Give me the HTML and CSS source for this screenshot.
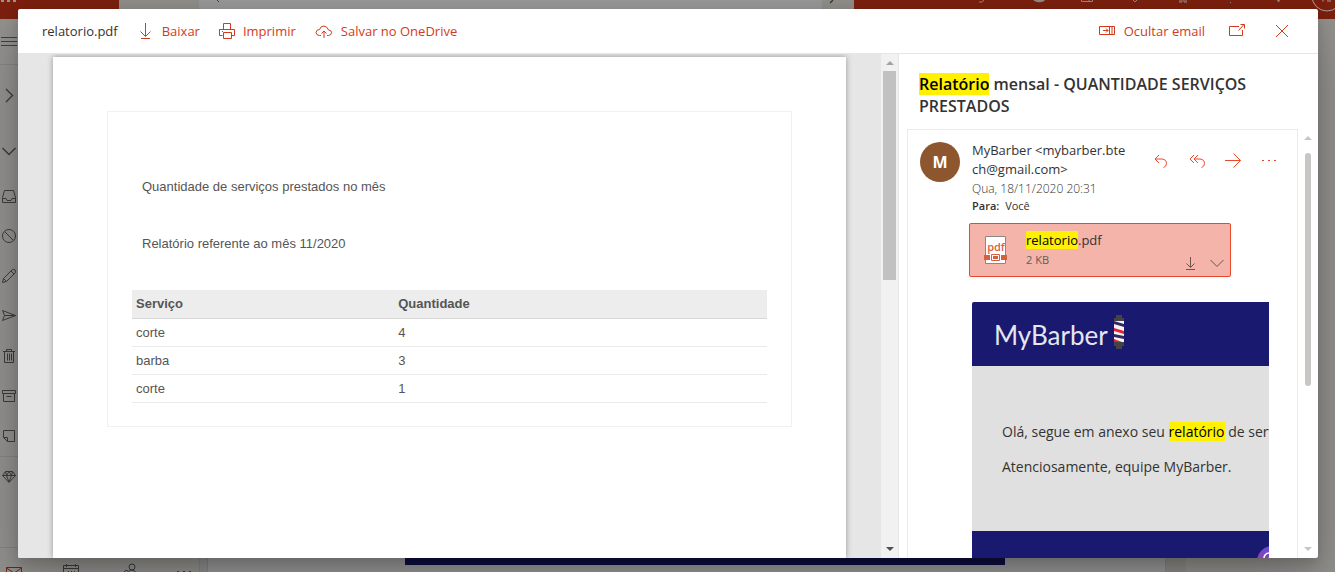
FILE: index.html
```html
<!DOCTYPE html>
<html lang="pt-BR">
<head>
<meta charset="utf-8">
<title>relatorio.pdf</title>
<link rel="stylesheet" href="styles.css">
</head>
<body>
<div class="app" aria-hidden="true">
  <div class="topbar">
    <div class="brand"><svg width="18" height="4" viewBox="0 0 18 4"><path fill="#9a9390" d="M1 0h3v2H1zM7 0h3v2H7zM13 0h3v2h-3z"/></svg></div>
    <div class="search-side search-start"></div>
    <div class="search-field"><svg width="12" height="4" viewBox="0 0 12 4"><path stroke="#444" fill="none" d="M2 0l2 2"/></svg></div>
    <div class="search-side search-end"><svg width="12" height="4" viewBox="0 0 12 4"><path stroke="#333" stroke-width="1.2" fill="none" d="M7 0L4 3"/></svg></div>
    <div class="tools">
      <span class="tool first"><svg width="16" height="5" viewBox="0 0 16 5"><path stroke="#958a86" fill="none" d="M5 2q4 1 5-2"/></svg></span>
      <span class="tool"><svg width="16" height="5" viewBox="0 0 16 5"><path fill="#958a86" d="M2 0h12q-1 2-4 2-4 1-8-2z"/></svg></span>
      <span class="tool"><svg width="16" height="5" viewBox="0 0 16 5"><path stroke="#958a86" fill="none" d="M2.500 0v1.500h11V0M10 0v1.500"/></svg></span>
      <span class="tool"><svg width="16" height="5" viewBox="0 0 16 5"><path stroke="#958a86" fill="none" d="M6 0l2 2 2-2"/></svg></span>
      <span class="tool"><svg width="16" height="5" viewBox="0 0 16 5"><path stroke="#958a86" fill="none" d="M4 2h3V0M12 2H9V0M5 0v2M11 0v2"/></svg></span>
      <span class="tool"><svg width="16" height="5" viewBox="0 0 16 5"><path fill="#958a86" d="M7 2h1v1H7z"/></svg></span>
      <span class="tool"><svg width="16" height="5" viewBox="0 0 16 5"><path fill="#958a86" d="M6 0h3l-1 2H7z"/></svg></span>
      <span class="tool"><svg width="34" height="12" viewBox="0 0 34 12"><circle cx="17" cy="-4" r="15" fill="none" stroke="#aaa19e"/><path stroke="#aaa19e" fill="none" d="M13 0v1.500M17 1h4"/></svg></span>
    </div>
  </div>
  <div class="workspace">
    <div class="rail">
      <div class="rail-menu"><svg width="18" height="10" viewBox="0 0 18 10"><path stroke="#80271a" d="M1 .5h16M1 4.500h16M1 8.500h16"/></svg></div>
      <div class="rail-row tall"><svg width="18" height="18" viewBox="0 0 18 18"><path class="ln thick" d="M6 3l6.500 6.500L6 16"/></svg></div>
      <div class="rail-row mid"><svg width="18" height="18" viewBox="0 0 18 18"><path class="ln thick" d="M2.500 6L9 12.500 15.500 6"/></svg></div>
      <div class="rail-row"><svg width="18" height="18" viewBox="0 0 18 18"><path class="ln" d="M4.500 3.500h9l2 7v5h-13v-5zM2.500 11.500H6l1 2h4l1-2h3.500"/></svg></div>
      <div class="rail-row"><svg width="18" height="18" viewBox="0 0 18 18"><circle class="ln" cx="9" cy="9" r="6.500"/><path class="ln" d="M4.500 4.500l9 9"/></svg></div>
      <div class="rail-row"><svg width="18" height="18" viewBox="0 0 18 18"><path class="ln" d="M2.500 15.500l1-4 9-9q1.500-.5 2.500.5t.5 2.500l-9 9zM3.500 11.500l3 3M11 4l3 3"/></svg></div>
      <div class="rail-row"><svg width="18" height="18" viewBox="0 0 18 18"><path class="ln" d="M2.500 3.500l13 5-13 5 2-5zM4.500 8.500h11"/></svg></div>
      <div class="rail-row"><svg width="18" height="18" viewBox="0 0 18 18"><path class="ln" d="M3 4.500h12M6.500 4V2.500h5V4M4.500 4.500v11h9v-11M7.500 6.500v7M9.500 6.500v7M11.500 6.500v7"/></svg></div>
      <div class="rail-row"><svg width="18" height="18" viewBox="0 0 18 18"><path class="ln" d="M2.500 3.500h13v3h-13zM3.500 6.500v8h11v-8M6.500 9.500h5"/></svg></div>
      <div class="rail-row"><svg width="18" height="18" viewBox="0 0 18 18"><path class="ln" d="M3.500 3.500h11v11h-7l-4-4zM3.500 10.500h4v4"/></svg></div>
      <div class="rail-row ruled"><svg width="18" height="18" viewBox="0 0 18 18"><path class="ln" d="M5.500 3.500h7l3 4-6.500 7-6.500-7zM2.500 7.500h13M5.500 3.500l1 4L9 14l2.500-6.500 1-4M6.500 7.500L9 3.500l2.500 4"/></svg></div>
      <div class="rail-nav">
        <svg width="16" height="16" viewBox="0 0 16 16"><path fill="none" stroke="#7a241a" d="M.5 4.500h15v10H.5zM.5 5L8 10l7.500-5"/></svg>
        <svg width="16" height="16" viewBox="0 0 16 16"><path class="ln" d="M.5 2.500h15v13H.5zM.5 5.500h15M3.500 1v3M12.500 1v3M5 8.500h1M8 8.500h1M11 8.500h1"/></svg>
        <svg width="16" height="16" viewBox="0 0 16 16"><circle class="ln" cx="12" cy="4" r="3"/><path class="ln" d="M7 13q0-6 5-6 3 0 4 3M4 9q2-3 4-1"/></svg>
        <svg width="16" height="16" viewBox="0 0 16 16"><path fill="#3c3c3c" d="M0 8h2v1H0zM6 8h2v1H6zM12 8h2v1h-2z"/></svg>
      </div>
    </div>
    <div class="reading"><div class="mail-strip"></div></div>
    <div class="ad"></div>
  </div>
</div>

<main class="dialog" role="dialog" aria-label="relatorio.pdf">
  <header class="bar">
    <span class="file">relatorio.pdf</span>
    <button class="cmd" type="button"><svg width="16" height="18" viewBox="0 0 16 18"><path d="M7.500 1v13M2.500 9.500l5 5 5-5M3 16.500h9"/></svg>Baixar</button>
    <button class="cmd print" type="button"><svg width="16" height="18" viewBox="0 0 16 18"><path d="M4.500 7.500v-6h7v6M3.500 13.500h-3v-6h15v6h-3M4.500 10.500h8v6h-8zM3 9.500h1"/></svg>Imprimir</button>
    <button class="cmd" type="button"><svg width="18" height="18" viewBox="0 0 18 18"><path d="M6 13.500H4.500q-3 0-3.500-3 .5-3 3.500-3 1-3.500 4.500-3.500 3.500.5 4.500 4 3 0 3 2.500t-3 3H12M9 16V9M6.500 11.500L9 9l2.500 2.500"/></svg>Salvar no OneDrive</button>
    <div class="bar-end">
      <button class="cmd" type="button"><svg width="18" height="18" viewBox="0 0 18 18"><path d="M1.500 4.500h15v8h-15zM11.500 4.500v8M14 4.500v8M5 8.500h5M8 6.500l2 2-2 2"/></svg>Ocultar email</button>
      <button class="cmd icon" type="button" aria-label="Abrir em nova janela"><svg width="16" height="18" viewBox="0 0 16 18"><path d="M10 4.500H.5v9h13V8M9.500 8.500l5.500-6M11.500 2.500h4v4"/></svg></button>
      <button class="cmd icon close" type="button" aria-label="Fechar"><svg width="14" height="18" viewBox="0 0 14 18"><path d="M1 3l12 12M13 3L1 15"/></svg></button>
    </div>
  </header>
  <div class="content">
    <section class="viewer">
      <article class="sheet">
        <div class="frame">
          <p>Quantidade de serviços prestados no mês</p>
          <p>Relatório referente ao mês 11/2020</p>
          <table>
            <thead><tr><th>Serviço</th><th>Quantidade</th></tr></thead>
            <tbody>
              <tr><td>corte</td><td>4</td></tr>
              <tr><td>barba</td><td>3</td></tr>
              <tr><td>corte</td><td>1</td></tr>
            </tbody>
          </table>
        </div>
      </article>
    </section>
    <div class="scroll viewer-scroll" aria-hidden="true">
      <svg width="8" height="4" viewBox="0 0 8 4"><path fill="#a3a3a3" d="M0 4l4-4 4 4z"/></svg>
      <span class="thumb"></span>
      <svg width="8" height="4" viewBox="0 0 8 4"><path fill="#505050" d="M0 0h8L4 4z"/></svg>
    </div>
    <aside class="mail">
      <h1><mark>Relatório</mark> mensal - QUANTIDADE SERVIÇOS PRESTADOS</h1>
      <div class="mail-row">
        <div class="card">
          <div class="sender">
            <div class="avatar">M</div>
            <div class="meta">
              <div class="from">MyBarber &lt;mybarber.bte<wbr>ch@gmail.com&gt;</div>
              <div class="date">Qua, 18/11/2020 20:31</div>
              <div class="to"><b>Para:</b> Você</div>
            </div>
            <div class="actions">
              <button type="button" aria-label="Responder"><svg width="16" height="16" viewBox="0 0 16 16"><path d="M6 2L2 6l4 4M2 6h7q4.500.5 4.500 4.500 0 3-3 4"/></svg></button>
              <button type="button" aria-label="Responder a todos"><svg width="16" height="16" viewBox="0 0 16 16"><path d="M5 2L1 6l4 4M9 2L5 6l4 4M5 6h6q4.500.5 4.500 4.500 0 3-3 4"/></svg></button>
              <button type="button" aria-label="Encaminhar"><svg width="16" height="16" viewBox="0 0 16 16"><path d="M0 7.500h15.500M8.500 .5l7 7-7 7"/></svg></button>
              <button type="button" aria-label="Mais ações"><svg class="dots" width="16" height="16" viewBox="0 0 16 16"><path d="M1 7h2v1H1zM7 7h2v1H7zM13 7h2v1h-2z"/></svg></button>
            </div>
          </div>
          <div class="attachment">
            <svg width="24" height="28" viewBox="0 0 24 28"><path fill="#fff" stroke="#8a8886" d="M1.500.5h20v27h-20z"/><text x="12" y="15" text-anchor="middle" class="pdf">pdf</text><path fill="#d65f3d" d="M0 19h6v5H0zM17 19h6v5h-6z"/><path fill="#fff" d="M6 17h11v9H6z"/><path fill="#fff" stroke="#d65f3d" d="M7.500 18.500h8v6h-8z"/><path fill="#d65f3d" d="M9 20h5v3H9z"/></svg>
            <div class="att-text">
              <div class="att-name"><mark>relatorio</mark>.pdf</div>
              <div class="att-size">2 KB</div>
            </div>
            <div class="att-actions">
              <button type="button" aria-label="Baixar anexo"><svg width="12" height="16" viewBox="0 0 12 16"><path d="M6.500 1v10M2.500 7.500l4 4 4-4M2 13.500h9"/></svg></button>
              <button type="button" aria-label="Mais opções do anexo"><svg width="14" height="16" viewBox="0 0 14 16"><path d="M.5 4L7 10.500 13.500 4"/></svg></button>
            </div>
          </div>
          <div class="message">
            <div class="letter">
              <div class="letter-head"><span>MyBarber</span><svg width="12" height="36" viewBox="0 0 12 36"><path fill="#444" d="M3 1h6v3h2v3H1V4h2zM1 28h10v4H9v3H3v-3H1z"/><path fill="#f5f3f6" d="M1 7h10v21H1z"/><path fill="#33285e" d="M1 7l10 3v3L1 10z"/><path fill="#e3262b" d="M1 14l10 3v3L1 17z"/><path fill="#33285e" d="M1 20l10 2v3L1 23z"/><path fill="#e3262b" d="M1 25l8 3H1z"/></svg></div>
              <div class="letter-body">
                <p>Olá, segue em anexo seu <mark>relatório</mark> de serviços.</p>
                <p>Atenciosamente, equipe MyBarber.</p>
              </div>
              <div class="letter-foot"><svg width="30" height="30" viewBox="0 0 30 30"><defs><linearGradient id="ig" x1="0" y1="0" x2="0" y2="1"><stop offset="0" stop-color="#5b50dc"/><stop offset=".4" stop-color="#8f3fb0"/><stop offset="1" stop-color="#f09433"/></linearGradient></defs><circle cx="15" cy="15" r="15" fill="url(#ig)"/><rect x="7" y="7" width="16" height="16" rx="5" fill="none" stroke="#fff" stroke-width="1.500"/><circle cx="15" cy="15" r="4" fill="none" stroke="#fff" stroke-width="1.500"/></svg></div>
            </div>
          </div>
        </div>
        <div class="scroll mail-scroll" aria-hidden="true">
          <svg width="8" height="4" viewBox="0 0 8 4"><path fill="#c2c8ca" d="M0 4l4-4 4 4z"/></svg>
          <span class="thumb"></span>
          <svg width="8" height="4" viewBox="0 0 8 4"><path fill="#c2c8ca" d="M0 0h8L4 4z"/></svg>
        </div>
      </div>
    </aside>
  </div>
</main>
</body>
</html>
```

FILE: styles.css
```css
* { box-sizing: border-box; }
html, body { height: 100%; }
body {
  margin: 0;
  overflow: hidden;
  background: #8f8f8f;
  color: #333;
  font-family: "Open Sans", "Noto Sans", sans-serif;
  font-size: 13px;
}
svg { display: block; flex: none; }
button {
  margin: 0;
  padding: 0;
  border: 0;
  background: none;
  font: inherit;
  color: inherit;
  cursor: pointer;
}
mark { background: #fff100; color: #000; }

/* Dimmed mailbox behind the dialog */
.app { height: 100vh; display: flex; flex-direction: column; }
.topbar { display: flex; height: 19px; flex: none; }
.brand { width: 119px; background: #7c200f; }
.search-side { background: #8f8e8a; }
.search-start { width: 80px; }
.search-end { width: 32px; padding-left: 4px; }
.search-field { flex: 1; padding-left: 16px; background: #989898; }
.tools {
  width: 481px;
  display: flex;
  justify-content: flex-end;
  background: #7c200f;
  overflow: hidden;
}
.tool { width: 48px; flex: none; display: flex; justify-content: center; }
.tool.first { width: 66px; }
.tool:last-child { margin-right: -16px; }
.workspace { flex: 1; min-height: 0; display: flex; overflow: hidden; }
.rail {
  width: 200px;
  display: flex;
  flex-direction: column;
  background: #92918e;
  border-right: 1px solid #858585;
}
.rail-menu {
  height: 46px;
  flex: none;
  padding-top: 18px;
  border-bottom: 1px solid #858482;
}
.rail-row { height: 40px; flex: none; display: flex; align-items: center; }
.rail-row.tall { height: 60px; }
.rail-row.mid { height: 51px; }
.rail-row.ruled { border-top: 1px solid #858482; }
.rail-nav {
  flex: 1;
  margin-top: 51px;
  padding: 15px 0 0 6px;
  display: flex;
  gap: 41px;
  border-top: 1px solid #858482;
}
.ln { fill: none; stroke: #3c3c3c; }
.thick { stroke-width: 1.4; }
.reading {
  flex: 1;
  margin-left: 7px;
  padding: 0 160px 7px 197px;
  border-left: 1px solid #858585;
  border-right: 1px solid #858585;
  background: #989898;
  display: flex;
}
.mail-strip { flex: 1; background: #0e0e42; }
.ad { width: 169px; border-left: 20px solid #8b8a87; background: #92918e; }

/* Attachment preview dialog */
.dialog {
  position: absolute;
  inset: 9px 17px 14px 18px;
  display: flex;
  flex-direction: column;
  background: #fff;
  border-radius: 2px;
  overflow: hidden;
  box-shadow: 0 26px 58px rgba(0, 0, 0, .22), 0 5px 14px rgba(0, 0, 0, .18);
}
.bar {
  height: 45px;
  flex: none;
  display: flex;
  align-items: center;
  padding: 0 29px 0 24px;
  border-bottom: 1px solid #e6e6e6;
}
.file { margin-right: 20px; }
.cmd {
  display: flex;
  align-items: center;
  gap: 8px;
  margin-right: 19px;
  color: #d13a1b;
}
.cmd svg, .actions svg, .att-actions svg { fill: none; stroke: currentColor; }
.bar-end { margin-left: auto; display: flex; }
.bar-end .cmd { margin-right: 24px; }
.bar-end .icon { margin-right: 30px; }
.bar-end .close { margin-right: 0; }
.content { flex: 1; min-height: 0; display: flex; }
.viewer {
  flex: 1;
  min-width: 0;
  padding: 3px 35px 0;
  display: flex;
  background: #e6e6e6;
  overflow: hidden;
}
.sheet {
  flex: 1;
  padding: 54px;
  background: #fff;
  box-shadow: 0 0 6px rgba(0, 0, 0, .35);
  color: #555;
  font-family: "Liberation Sans", Arial, sans-serif;
  line-height: 17px;
}
.frame { padding: 66px 24px 23px; border: 1px solid #f1f1f1; }
.frame p { margin: 0 0 40px 10px; }
.frame p + p { margin-bottom: 0; }
.frame table { width: 100%; margin-top: 38px; border-collapse: collapse; }
.frame th, .frame td {
  height: 28px;
  padding: 0 4px;
  text-align: left;
  border-bottom: 1px solid #eaeaea;
}
.frame th { background: #ededed; border-bottom-color: #d8d8d8; }
.frame th:first-child { width: 41.3%; }

.scroll { display: flex; flex-direction: column; align-items: center; flex: none; }
.viewer-scroll {
  width: 18px;
  padding: 7px 0 7px;
  background: #f1f1f1;
  border-right: 1px solid #e6e6e6;
}
.viewer-scroll .thumb { width: 13px; height: 209px; margin: 6px 0 auto; background: #c1c1c1; }

.mail {
  width: 419px;
  flex: none;
  display: flex;
  flex-direction: column;
  padding: 19px 0 0 8px;
}
.mail h1 {
  margin: 0 20px 12px 12px;
  font-size: 16px;
  line-height: 22px;
  font-weight: 600;
}
.mail-row { flex: 1; min-height: 0; display: flex; }
.card {
  flex: 1;
  min-width: 0;
  overflow: hidden;
  border: 1px solid #eaeaea;
  border-bottom: 0;
  padding: 11px 12px 0;
}
.mail-scroll { width: 20px; padding: 7px 0; }
.mail-scroll .thumb {
  width: 6px;
  height: 233px;
  margin: 13px 0 auto;
  border-radius: 3px;
  background: #c8c6c4;
}
.sender { display: flex; }
.avatar {
  width: 40px;
  height: 40px;
  flex: none;
  margin: 1px 12px 0 0;
  border-radius: 50%;
  background: #8e562e;
  color: #fff;
  font-size: 16px;
  font-weight: 700;
  line-height: 40px;
  text-align: center;
}
.meta { flex: 1; }
.from { line-height: 19px; }
.date, .to { font-size: 12px; line-height: 17px; }
.date { margin-top: 1px; font-weight: 300; }
.to { font-size: 11px; }
.to b { font-weight: 600; margin-right: 3px; }
.actions { display: flex; gap: 20px; height: 40px; margin-right: 8px; color: #e8482c; }
.actions .dots { fill: currentColor; stroke: none; }
.attachment {
  width: 262px;
  height: 54px;
  margin: 9px 0 25px 49px;
  padding: 6px 6px 0 14px;
  display: flex;
  border: 1px solid #e8482c;
  border-radius: 2px;
  background: #f4b4a9;
}
.attachment > svg { margin-top: 6px; }
.pdf { fill: #d65f3d; font-size: 11px; font-weight: 600; }
.att-text { flex: 1; margin-left: 18px; }
.att-name { line-height: 20px; }
.att-size { font-size: 11px; line-height: 20px; color: #605e5c; }
.att-actions { display: flex; gap: 14px; align-items: flex-end; padding-bottom: 4px; color: #6b5552; }
.message { margin: 0 16px 0 52px; overflow: hidden; border-radius: 2px 0 0; }
.letter { width: 600px; background: #e0e0e0; }
.letter-head {
  height: 64px;
  padding: 0 22px;
  display: flex;
  align-items: center;
  gap: 5px;
  background: #191970;
  color: #e6e6ee;
  font-family: Lato, "Open Sans", sans-serif;
  font-size: 26px;
}
.letter-head span { padding-top: 2px; }
.letter-head svg { margin-bottom: 4px; }
.letter-body { padding: 56px 30px 54px; font-size: 14px; line-height: 20px; }
.letter-body p { margin: 0 0 15px; }
.letter-body p:last-child { margin: 0; }
.letter-foot {
  height: 60px;
  display: flex;
  justify-content: center;
  align-items: center;
  background: #191970;
}
```
